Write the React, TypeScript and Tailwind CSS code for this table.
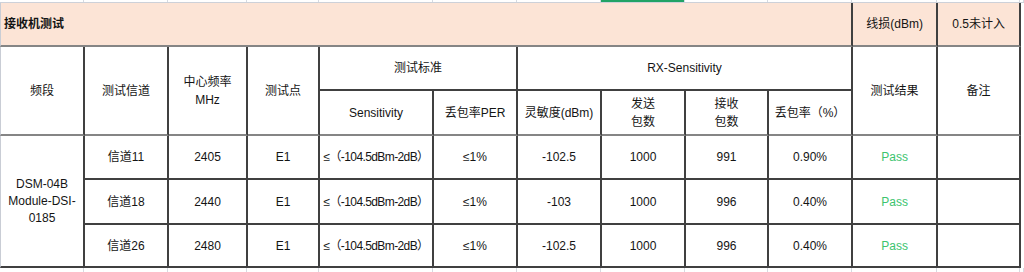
import React from 'react';

type Row = { ch: string; freq: string; sens: string; sent: string; recv: string; per: string };

const rows: Row[] = [
  { ch: '信道11', freq: '2405', sens: '-102.5', sent: '1000', recv: '991', per: '0.90%' },
  { ch: '信道18', freq: '2440', sens: '-103', sent: '1000', recv: '996', per: '0.40%' },
  { ch: '信道26', freq: '2480', sens: '-102.5', sent: '1000', recv: '996', per: '0.40%' },
];

const strip =
  'grid grid-cols-[84px_84px_79px_72px_114px_84px_84px_84px_83px_84px_85px_83px_1fr]';

// each cell draws its own right and bottom edge, so lines stay on whole pixels
const td = 'p-0 text-center align-middle border-r-2 border-b-2 border-[#404040]';
const headBottom = 'border-b-[#858585]';
const firstCol = 'border-l border-l-[#c9cdd5]';

export default function App() {
  return (
    <div className="w-[1024px] h-[272px] overflow-hidden bg-white text-[12px] leading-[18px] text-[#141414] font-['Liberation_Sans','Noto_Sans_CJK_SC',sans-serif]">
      {/* gridlines of the sheet row above */}
      <div className={`${strip} h-[3px] border-b border-[#cdd1d9]`}>
        {Array.from({ length: 13 }).map((_, i) => (
          <div key={i} className="border-r border-[#d6dae1]">
            {i === 7 && <div className="h-[2px] bg-[#21a366]" />}
          </div>
        ))}
      </div>

      <table className="table-fixed border-separate border-spacing-0 w-[1021px]">
        <colgroup>
          <col className="w-[85px]" />
          <col className="w-[84px]" />
          <col className="w-[79px]" />
          <col className="w-[72px]" />
          <col className="w-[114px]" />
          <col className="w-[84px]" />
          <col className="w-[84px]" />
          <col className="w-[84px]" />
          <col className="w-[83px]" />
          <col className="w-[84px]" />
          <col className="w-[85px]" />
          <col className="w-[83px]" />
        </colgroup>
        <tbody>
          <tr className="h-[44px] bg-[#fce4d6]">
            <td colSpan={10} className={`${td} ${firstCol} ${headBottom} pl-[3px] font-bold text-left`}>
              接收机测试
            </td>
            <td className={`${td} ${headBottom}`}>线损(dBm)</td>
            <td className={`${td} ${headBottom}`}>0.5未计入</td>
          </tr>

          <tr className="h-[44px]">
            <td rowSpan={2} className={`${td} ${firstCol} ${headBottom}`}>频段</td>
            <td rowSpan={2} className={`${td} ${headBottom}`}>测试信道</td>
            <td rowSpan={2} className={`${td} ${headBottom}`}>
              中心频率
              <br />
              MHz
            </td>
            <td rowSpan={2} className={`${td} ${headBottom}`}>测试点</td>
            <td colSpan={2} className={td}>测试标准</td>
            <td colSpan={4} className={td}>RX-Sensitivity</td>
            <td rowSpan={2} className={`${td} ${headBottom}`}>测试结果</td>
            <td rowSpan={2} className={`${td} ${headBottom}`}>备注</td>
          </tr>
          <tr className="h-[45px]">
            <td className={`${td} ${headBottom}`}>Sensitivity</td>
            <td className={`${td} ${headBottom}`}>丢包率PER</td>
            <td className={`${td} ${headBottom}`}>灵敏度(dBm)</td>
            <td className={`${td} ${headBottom}`}>
              发送
              <br />
              包数
            </td>
            <td className={`${td} ${headBottom}`}>
              接收
              <br />
              包数
            </td>
            <td className={`${td} ${headBottom}`}>丢包率（%）</td>
          </tr>

          {rows.map((r, i) => (
            <tr key={r.ch} className={i === 1 ? 'h-[45px]' : i === 2 ? 'h-[43px]' : 'h-[44px]'}>
              {i === 0 && (
                <td rowSpan={3} className={`${td} ${firstCol} leading-[17px]`}>
                  DSM-04B
                  <br />
                  Module-DSI-
                  <br />
                  0185
                </td>
              )}
              <td className={td}>{r.ch}</td>
              <td className={td}>{r.freq}</td>
              <td className={td}>E1</td>
              <td className={`${td} whitespace-nowrap tracking-[-0.6px]`}>≤（-104.5dBm-2dB）</td>
              <td className={td}>≤1%</td>
              <td className={td}>{r.sens}</td>
              <td className={td}>{r.sent}</td>
              <td className={td}>{r.recv}</td>
              <td className={td}>{r.per}</td>
              <td className={`${td} text-[#3cc46e]`}>Pass</td>
              <td className={td}></td>
            </tr>
          ))}
        </tbody>
      </table>

      {/* gridlines of the empty sheet row below */}
      <div className={`${strip} h-[6px]`}>
        {Array.from({ length: 13 }).map((_, i) => (
          <div key={i} className="border-r border-[#d6dae1]" />
        ))}
      </div>
    </div>
  );
}
